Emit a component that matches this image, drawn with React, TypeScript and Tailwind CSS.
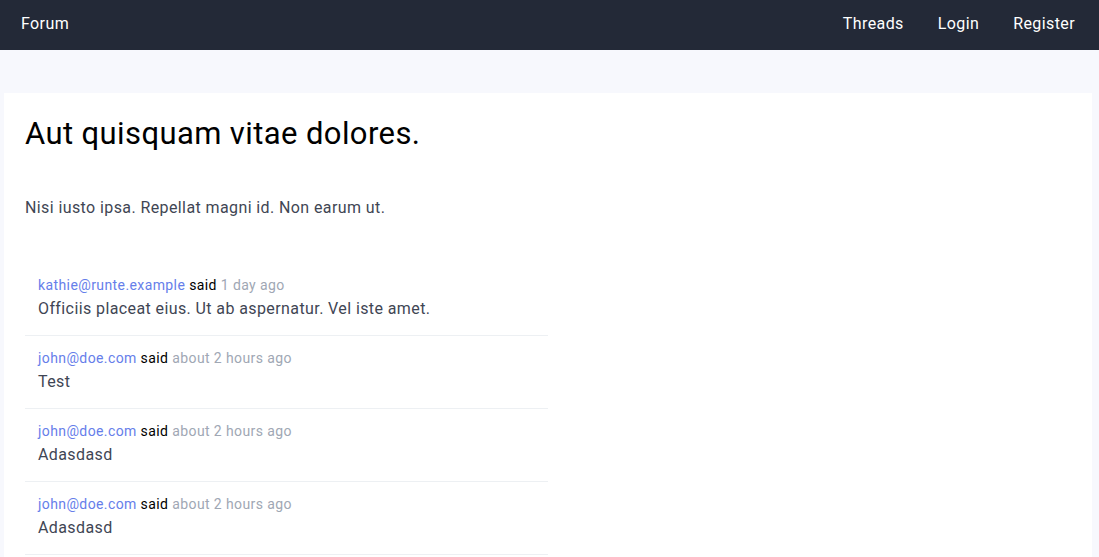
import React from "react";

type Reply = {
  author: string;
  when: string;
  body: string;
};

const replies: Reply[] = [
  {
    author: "kathie@runte.example",
    when: "1 day ago",
    body: "Officiis placeat eius. Ut ab aspernatur. Vel iste amet.",
  },
  { author: "john@doe.com", when: "about 2 hours ago", body: "Test" },
  { author: "john@doe.com", when: "about 2 hours ago", body: "Adasdasd" },
  { author: "john@doe.com", when: "about 2 hours ago", body: "Adasdasd" },
];

export default function App() {
  return (
    <div
      className="min-h-screen bg-[#f7f8fd] tracking-wide"
      style={{ fontFamily: "Roboto, 'Liberation Sans', sans-serif" }}
    >
      {/* Navigation */}
      <nav className="h-[50px] bg-[#232937] flex items-center justify-between pl-[21px] pr-6 pb-[2px] text-white text-base">
        <a href="#">Forum</a>
        <div className="flex items-center gap-[34px]">
          <a href="#">Threads</a>
          <a href="#">Login</a>
          <a href="#">Register</a>
        </div>
      </nav>

      {/* Thread */}
      <main className="ml-1 mr-[7px] mt-[43px] bg-white pt-[23px] px-[21px] pb-2">
        <h1 className="text-[31px] leading-9 text-black">
          Aut quisquam vitae dolores.
        </h1>
        <p className="mt-[44px] text-base leading-6 text-[#3f4654]">
          Nisi iusto ipsa. Repellat magni id. Non earum ut.
        </p>

        <ul className="mt-[43px] w-1/2">
          {replies.map((r, i) => (
            <li key={i} className="border-b border-[#edf0f3] pl-[13px] pt-3 pb-[14px]">
              <div className="text-sm leading-5">
                <a href="#" className="text-[#667eea]">
                  {r.author}
                </a>{" "}
                <span className="text-black">said</span>{" "}
                <span className="text-[#a0a7b4]">{r.when}</span>
              </div>
              <p className="mt-[2px] text-base leading-6 text-[#3f4654]">{r.body}</p>
            </li>
          ))}
        </ul>
      </main>
    </div>
  );
}
